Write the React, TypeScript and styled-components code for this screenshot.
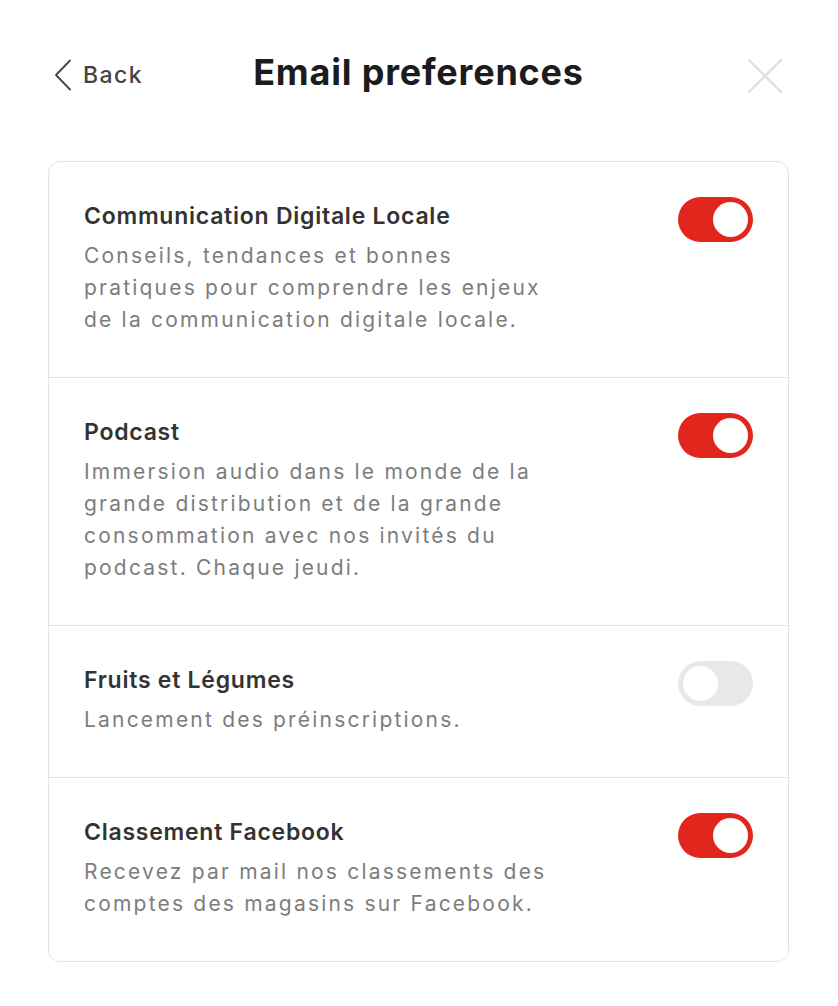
import React, { useState } from "react";
import styled, { createGlobalStyle } from "styled-components";

const GlobalStyle = createGlobalStyle`
  html, body {
    margin: 0;
    padding: 0;
    background: #ffffff;
    font-family: Inter, "Noto Sans", "Liberation Sans", sans-serif;
    -webkit-font-smoothing: antialiased;
  }
`;

const Page = styled.div`
  width: 838px;
  padding: 0 49px 0 48px;
  box-sizing: border-box;
`;

const Header = styled.header`
  height: 161px;
  box-sizing: border-box;
  padding-top: 50px;
  display: grid;
  grid-template-columns: 1fr auto 1fr;
  align-items: start;
`;

const BackButton = styled.button`
  justify-self: start;
  display: flex;
  align-items: center;
  gap: 11px;
  height: 44px;
  margin-top: 3px;
  border: none;
  background: none;
  padding: 0 0 0 6px;
  font-family: inherit;
  font-size: 23px;
  font-weight: 500;
  letter-spacing: 1.4px;
  color: #444444;
  cursor: pointer;
`;

const Title = styled.h1`
  margin: 0;
  font-size: 36px;
  font-weight: 700;
  line-height: 44px;
  letter-spacing: 0.8px;
  color: #1c1c1c;
`;

const CloseButton = styled.button`
  justify-self: end;
  margin-top: 8px;
  border: none;
  background: none;
  padding: 0 6px 0 0;
  display: flex;
  cursor: pointer;
`;

const Card = styled.section`
  border: 1px solid #e3e3e3;
  border-radius: 12px;
  overflow: hidden;
`;

const Row = styled.div`
  display: flex;
  align-items: flex-start;
  justify-content: space-between;
  padding: 40px 35px 41px 35px;
  & + & {
    border-top: 1px solid #e3e3e3;
  }
`;

const Texts = styled.div`
  max-width: 480px;
`;

const RowTitle = styled.div`
  font-size: 23px;
  font-weight: 600;
  line-height: 28px;
  letter-spacing: 0.75px;
  color: #333333;
  margin-bottom: 10px;
`;

const RowDesc = styled.div`
  font-size: 21px;
  line-height: 32px;
  letter-spacing: 2.2px;
  color: #7d7d7d;
`;

const Switch = styled.button<{ $on: boolean }>`
  position: relative;
  flex-shrink: 0;
  width: 75px;
  height: 45px;
  margin-top: -5px;
  border: none;
  padding: 0;
  border-radius: 23px;
  background: ${(p) => (p.$on ? "#e0261d" : "#e8e8e8")};
  cursor: pointer;

  &::after {
    content: "";
    position: absolute;
    top: 5px;
    left: ${(p) => (p.$on ? "35px" : "5px")};
    width: 35px;
    height: 35px;
    border-radius: 50%;
    background: #ffffff;
    transition: left 0.2s ease;
  }
`;

type Pref = {
  title: string;
  description: string;
  enabled: boolean;
};

const initialPrefs: Pref[] = [
  {
    title: "Communication Digitale Locale",
    description:
      "Conseils, tendances et bonnes pratiques pour comprendre les enjeux de la communication digitale locale.",
    enabled: true,
  },
  {
    title: "Podcast",
    description:
      "Immersion audio dans le monde de la grande distribution et de la grande consommation avec nos invités du podcast. Chaque jeudi.",
    enabled: true,
  },
  {
    title: "Fruits et Légumes",
    description: "Lancement des préinscriptions.",
    enabled: false,
  },
  {
    title: "Classement Facebook",
    description:
      "Recevez par mail nos classements des comptes des magasins sur Facebook.",
    enabled: true,
  },
];

const App: React.FC = () => {
  const [prefs, setPrefs] = useState(initialPrefs);

  const toggle = (index: number) =>
    setPrefs((list) =>
      list.map((p, i) => (i === index ? { ...p, enabled: !p.enabled } : p))
    );

  return (
    <>
      <GlobalStyle />
      <Page>
        <Header>
          <BackButton>
            <svg width="18" height="32" viewBox="0 0 18 32" fill="none">
              <path
                d="M16 1.5L2 16l14 14.5"
                stroke="#444"
                strokeWidth="1.8"
                strokeLinecap="round"
                strokeLinejoin="round"
              />
            </svg>
            Back
          </BackButton>
          <Title>Email preferences</Title>
          <CloseButton aria-label="Close">
            <svg width="36" height="36" viewBox="0 0 36 36" fill="none">
              <path
                d="M2 2l32 32M34 2L2 34"
                stroke="#dcdcdc"
                strokeWidth="2"
                strokeLinecap="round"
              />
            </svg>
          </CloseButton>
        </Header>
        <Card>
          {prefs.map((pref, index) => (
            <Row key={index}>
              <Texts>
                <RowTitle>{pref.title}</RowTitle>
                <RowDesc>{pref.description}</RowDesc>
              </Texts>
              <Switch
                $on={pref.enabled}
                aria-pressed={pref.enabled}
                onClick={() => toggle(index)}
              />
            </Row>
          ))}
        </Card>
      </Page>
    </>
  );
};

export default App;
